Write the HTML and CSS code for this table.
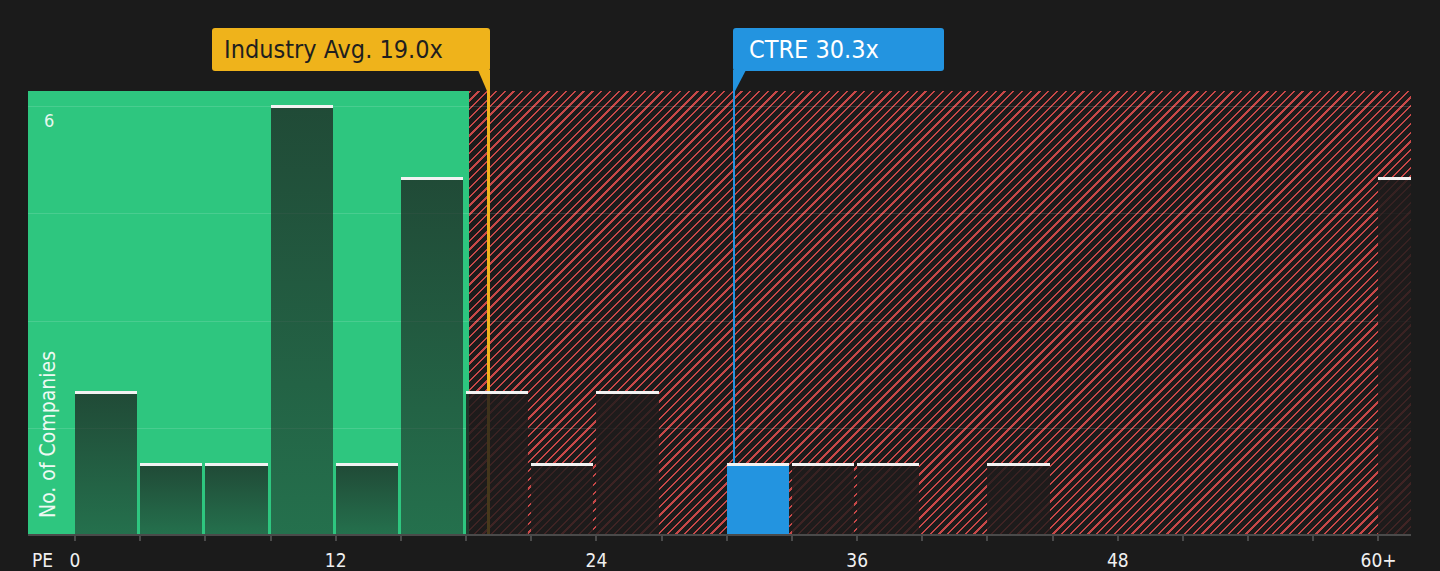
FILE: index.html
```html
<!DOCTYPE html>
<html lang="en">
<head>
<meta charset="utf-8">
<title>PE distribution</title>
<link rel="stylesheet" href="styles.css">
</head>
<body>
<div class="chart">
  <div class="callout callout-avg" style="left:212px">Industry Avg. 19.0x<span class="tail"></span></div>
  <div class="callout callout-co" style="left:733px">CTRE 30.3x<span class="tail"></span></div>

  <div class="plot">
    <div class="zones">
      <div class="zone-good"></div>
      <div class="zone-bad"></div>
    </div>
    <div class="gridlines"></div>
    <div class="marker marker-avg" style="left:459px"></div>
    <div class="marker marker-co" style="left:705px"></div>
    <div class="bars">
      <div class="bar" style="height:143px"></div>
      <div class="bar" style="height:71.5px"></div>
      <div class="bar" style="height:71.5px"></div>
      <div class="bar" style="height:429px"></div>
      <div class="bar" style="height:71.5px"></div>
      <div class="bar" style="height:357.5px"></div>
      <div class="bar bar-bad" style="height:143px"></div>
      <div class="bar bar-bad" style="height:71.5px"></div>
      <div class="bar bar-bad" style="height:143px"></div>
      <div class="slot"></div>
      <div class="bar bar-co" style="height:71.5px"></div>
      <div class="bar bar-bad" style="height:71.5px"></div>
      <div class="bar bar-bad" style="height:71.5px"></div>
      <div class="slot"></div>
      <div class="bar bar-bad" style="height:71.5px"></div>
      <div class="slot"></div>
      <div class="slot"></div>
      <div class="slot"></div>
      <div class="slot"></div>
      <div class="slot"></div>
      <div class="bar bar-bad" style="height:357.5px"></div>
    </div>
    <span class="y-tick">6</span>
    <span class="y-title">No. of Companies</span>
  </div>

  <div class="axis">
    <div class="ticks">
      <i></i><i></i><i></i><i></i><i></i><i></i><i></i><i></i><i></i><i></i><i></i>
      <i></i><i></i><i></i><i></i><i></i><i></i><i></i><i></i><i></i><i></i>
    </div>
  </div>
  <div class="tick-labels">
    <span class="axis-name">PE</span>
    <span class="tl"><span>0</span></span>
    <span class="tl"><span>12</span></span>
    <span class="tl"><span>24</span></span>
    <span class="tl"><span>36</span></span>
    <span class="tl"><span>48</span></span>
    <span class="tl"><span>60+</span></span>
  </div>
</div>
</body>
</html>
```
FILE: styles.css
```css
* { box-sizing: border-box; }

html, body {
  margin: 0;
  padding: 0;
  background: #1b1b1b;
}

body {
  font-family: "DejaVu Sans Condensed", "DejaVu Sans", sans-serif;
  font-stretch: semi-condensed;
  color: #f0f0f0;
}

.chart {
  position: relative;
  width: 1440px;
  height: 571px;
  overflow: hidden;
  padding-top: 91px;
}

/* callouts */
.callout {
  position: absolute;
  top: 28px;
  height: 43px;
  border-radius: 3px;
  font-size: 25px;
  line-height: 44px;
  white-space: nowrap;
  z-index: 5;
}

.callout-avg {
  width: 278px;
  padding-left: 12px;
  background: #efb31b;
  color: #1f1f1f;
}

.callout-co {
  width: 211px;
  padding-left: 16px;
  background: #2394e0;
  color: #ffffff;
}

.tail {
  position: absolute;
  top: 42px;
  height: 21px;
}

.callout-avg .tail {
  right: 0;
  width: 12px;
  background: #efb31b;
  clip-path: polygon(0 0, 100% 0, 100% 100%, 75% 100%);
}

.callout-co .tail {
  left: 0;
  width: 13px;
  background: #2394e0;
  clip-path: polygon(0 0, 100% 0, 16% 100%, 0 100%);
}

/* plot */
.plot {
  position: relative;
  margin-left: 28px;
  width: 1383px;
  height: 443px;
}

.zones {
  display: flex;
  height: 100%;
}

.zone-good {
  width: 441px;
  background: #2ec67f;
}

.zone-bad {
  flex: 1;
  background: repeating-linear-gradient(135deg,
    #c84848 0 1.6px,
    #1c1b1b 1.6px 6.2px);
}

.gridlines {
  position: absolute;
  top: 15px;
  left: 0;
  right: 0;
  height: 330px;
  background: repeating-linear-gradient(to bottom,
    rgba(255, 255, 255, 0.13) 0 1px,
    transparent 1px 107.25px);
}

.marker {
  position: absolute;
  top: -21px;
  bottom: 0;
}

.marker-avg {
  width: 3px;
  background: #efb31b;
}

.marker-co {
  width: 2px;
  background: #2394e0;
}

.bars {
  position: absolute;
  inset: 0;
  overflow: hidden;
  display: grid;
  grid-template-columns: repeat(21, 65.18px);
  align-items: end;
  padding-left: 47px;
  z-index: 2;
}

.bar {
  margin-right: 3px;
  border-top: 3px solid #f2f2f2;
  background: linear-gradient(to bottom,
    rgba(27, 27, 27, 0.72),
    rgba(27, 27, 27, 0.5));
}

.bar-bad {
  background: linear-gradient(to bottom,
    rgba(30, 27, 27, 0.86),
    rgba(30, 27, 27, 0.8));
}

.bar-co {
  background: #2394e0;
}

.y-tick {
  position: absolute;
  left: 16px;
  top: 21px;
  font-size: 18px;
  line-height: 18px;
  color: #e8f7ef;
  z-index: 3;
}

.y-title {
  position: absolute;
  left: 8px;
  bottom: 16px;
  writing-mode: vertical-rl;
  transform: rotate(180deg);
  font-size: 21px;
  line-height: 24px;
  color: #eef9f3;
  white-space: nowrap;
  z-index: 3;
}

/* axis */
.axis {
  margin-left: 28px;
  width: 1383px;
  border-top: 2px solid #4a4a4a;
}

.ticks {
  display: grid;
  grid-template-columns: repeat(21, 65.18px);
  padding-left: 46px;
  height: 5px;
}

.ticks i {
  display: block;
  width: 2px;
  height: 5px;
  background: #4a4a4a;
}

.tick-labels {
  display: flex;
  padding-left: 32px;
  margin-top: 10px;
  font-size: 19px;
  line-height: 18px;
  color: #f0f0f0;
  white-space: nowrap;
}

.axis-name {
  flex: none;
  width: 43px;
}

.tl {
  flex: none;
  width: 260.72px;
}

.tl span {
  display: inline-block;
  transform: translateX(-50%);
}
```
